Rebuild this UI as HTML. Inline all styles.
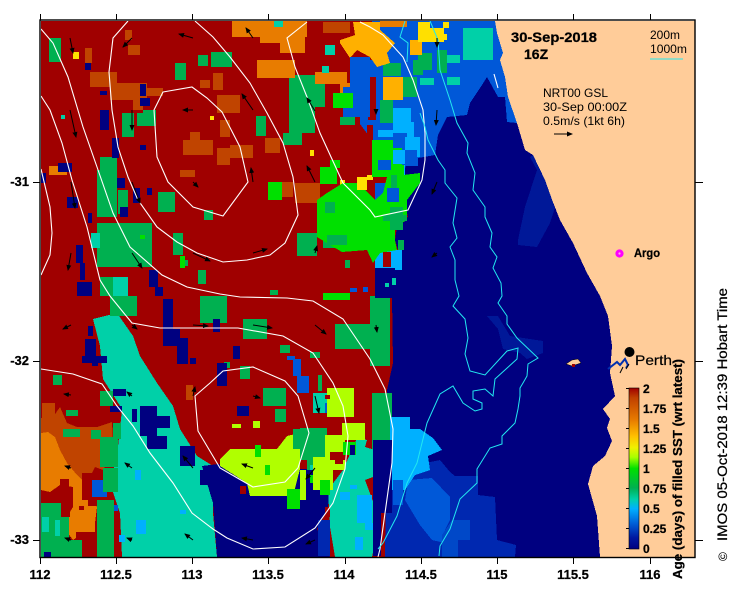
<!DOCTYPE html>
<html><head><meta charset="utf-8"><style>
html,body{margin:0;padding:0;background:#fff}
svg{display:block}
text{font-family:"Liberation Sans",sans-serif;fill:#000}
.b{font-weight:bold;stroke:#000;stroke-width:.25}
</style></head><body>
<svg width="739" height="592" viewBox="0 0 739 592" xmlns="http://www.w3.org/2000/svg">
<defs>
<linearGradient id="cb" x1="0" y1="0" x2="0" y2="1">
<stop offset="0" stop-color="#a00000"/><stop offset=".06" stop-color="#c04000"/><stop offset=".2" stop-color="#e87c00"/><stop offset=".3" stop-color="#ffc000"/><stop offset=".37" stop-color="#f0f000"/><stop offset=".43" stop-color="#a8ff00"/><stop offset=".5" stop-color="#00e000"/><stop offset=".62" stop-color="#00b050"/><stop offset=".69" stop-color="#00d0a8"/><stop offset=".75" stop-color="#00b0ff"/><stop offset=".84" stop-color="#0060d8"/><stop offset=".93" stop-color="#0018a0"/><stop offset="1" stop-color="#000080"/>
</linearGradient>
<marker id="ah" markerWidth="6" markerHeight="5" refX="5" refY="2.5" orient="auto" markerUnits="userSpaceOnUse"><path d="M0 0L6 2.5L0 5z" fill="#000"/></marker>
</defs>
<rect x="41" y="21" width="654" height="536" fill="#ffcc99"/>
<g shape-rendering="crispEdges">
<polygon fill="#000080" points="41,21 495,21 497,33 503,53 500,60 505,77 508,97 517,123 525,150 533,155 545,182 560,220 573,243 587,273 600,296 608,316 612,346 610,373 615,396 603,409 610,419 607,428 612,441 605,456 593,466 588,484 597,516 600,557 41,557"/>
<polygon fill="#001898" points="518,240 525,207 537,170 530,157 533,155 545,180 555,208 550,223 537,247 518,245"/>
<polygon fill="#001898" points="487,316 498,316 510,336 543,341 543,353 527,359 520,353 503,349 498,329"/>
<polygon fill="#0028b0" points="392,470 440,460 450,472 455,476 478,476 478,495 495,497 497,540 516,545 515,557 380,557"/>
<polygon fill="#0058d8" points="408,480 432,478 450,497 450,520 445,530 445,543 432,540 420,525 405,500"/>
<polygon fill="#0048c8" points="452,520 470,520 470,540 458,540 458,557 442,557 442,535"/>
<polygon fill="#00b0ff" points="392,429 420,429 433,438 442,450 428,456 430,470 415,475 405,490 392,490"/>
<polygon fill="#0058d8" points="370,21 495,21 497,33 503,53 500,60 505,77 508,97 517,123 507,122 505,97 498,97 487,77 482,85 470,103 467,115 447,117 438,135 435,155 407,160 403,177 380,177 345,110 345,60"/>
<polygon fill="#a00000" points="41,21 372,21 372,60 357,70 357,120 372,140 372,165 400,165 403,197 408,217 397,227 395,240 402,263 378,273 378,296 392,296 393,363 387,390 385,557 41,557"/>
<path fill="#0058d8" d="M350 60h50v50h-50zM347 87h30v30h-30zM372 100h30v60h-30zM372 150h46v16h-46z"/>
<polygon fill="#a00000" points="340,53 357,53 357,83 340,83"/>
<path fill="#a00000" d="M363 77h13v14h-13zM360 90h16v7h-16zM368 97h8v23h-8zM340 110h20v25h-20zM367 125h6v20h-6z"/>
<polygon fill="#00d0a8" points="93,319 117,313 133,336 140,356 157,383 173,406 180,429 197,456 213,466 213,513 217,557 122,557 120,513 110,483 117,456 120,429 122,409 103,379 100,346"/>
<polygon fill="#000080" points="202,466 227,463 253,488 300,469 330,469 328,509 317,529 330,557 217,557 213,503"/>
<polygon fill="#b0ff00" points="220,459 230,449 277,449 287,436 300,433 300,469 293,496 250,496 247,483 220,466"/>
<polygon fill="#c04400" points="41,418 53,417 60,407 67,423 77,427 97,427 112,422 113,443 107,463 103,470 95,467 90,477 80,480 67,463 60,450 55,437 41,433"/>
<path fill="#c04400" d="M42 403h13v15h-13z"/>
<polygon fill="#e87c00" points="41,433 48,432 55,437 60,450 67,463 77,475 82,480 82,493 90,500 97,507 95,523 95,532 83,533 73,540 67,532 67,517 73,507 73,487 60,485 50,492 41,490"/>
<path fill="#a00000" d="M60 479h9v8h-9zM42 492h15v11h-15zM58 503h12v14h-12zM67 487h6v20h-6zM76 532h27v25h-27zM82 473h25v27h-25zM88 500h9v6h-9zM79 506h5v4h-5z"/>
<path fill="#0058d8" d="M92 480h15v17h-15zM97 503h6v7h-6zM110 505h8v6h-8z"/>
<path fill="#00b050" d="M41 503h20v54h-20zM61 517h8v40h-8zM67 540h15v17h-15zM97 500h17v57h-17zM100 437h18v30h-18zM103 468h15v24h-15zM113 423h8v16h-8zM49 38h12v24h-12zM198 55h10v11h-10zM211 52h21v15h-21zM175 63h11v17h-11zM289 75h36v32h-36zM289 100h26v33h-26zM283 133h19v12h-19zM256 116h10v20h-10zM122 113h12v24h-12zM137 113h16v13h-16zM143 110h13v16h-13zM97 170h20v47h-20zM100 157h17v13h-17zM97 223h55v44h-55zM100 277h27v19h-27zM158 192h17v20h-17zM204 210h9v10h-9zM173 233h10v22h-10zM198 270h8v14h-8zM297 233h20v23h-20zM323 230h24v18h-24zM200 296h27v27h-27zM110 296h27v20h-27zM243 319h24v20h-24zM335 324h37v25h-37zM240 366h10v13h-10zM263 388h23v18h-23zM275 409h11v13h-11zM100 391h13v15h-13zM293 429h17v20h-17zM307 443h20v27h-20zM63 429h17v8h-17zM370 296h20v70h-20zM372 393h20v57h-20zM300 428h27v32h-27zM383 63h18v13h-18zM397 77h20v20h-20zM380 100h13v23h-13zM418 53h14v17h-14zM437 50h10v23h-10zM340 117h15v8h-15zM372 417h21v25h-21zM118 190h10v24h-10zM180 260h8v6h-8zM270 290h8v5h-8zM53 375h9v10h-9zM66 410h12v6h-12zM91 430h10v9h-10zM224 362h6v6h-6zM280 345h10v8h-10zM345 260h5v8h-5zM310 352h10v6h-10zM318 375h4v16h-4z"/>
<path fill="#c04400" d="M85 48h7v15h-7zM125 30h7v10h-7zM128 45h12v10h-12zM90 72h27v15h-27zM110 83h37v17h-37zM133 97h10v13h-10zM147 88h16v8h-16zM213 73h10v17h-10zM200 80h10v8h-10zM217 95h23v18h-23zM220 120h10v17h-10zM183 140h30v15h-30zM190 132h10v8h-10zM217 148h13v17h-13zM230 145h23v13h-23zM180 170h15v7h-15zM265 138h15v15h-15zM295 183h25v20h-25zM277 182h16v15h-16zM323 22h27v11h-27zM186 385h7v15h-7z"/>
<path fill="#e87c00" d="M232 21h75v16h-75zM260 27h33v16h-33zM280 37h25v16h-25zM257 60h38v18h-38zM315 72h32v12h-32zM49 166h18v9h-18zM380 21h27v6h-27zM340 83h10v20h-10z"/>
<polygon fill="#ffb000" points="353,22 380,22 380,30 395,43 387,53 390,63 377,67 370,57 357,50 350,58 340,43 340,40 355,35"/>
<path fill="#ffb000" d="M383 77h20v23h-20zM410 40h12v15h-12zM357 35h6v10h-6z"/>
<path fill="#ffe000" d="M73 52h6v7h-6zM418 22h12v20h-12zM425 34h22v6h-22zM430 28h14v14h-14zM443 22h6v6h-6zM210 116h4v4h-4zM310 150h4v6h-4zM357 177h13v6h-13zM367 175h6v6h-6zM383 249h10v3h-10zM367 243h6v7h-6zM340 180h5v10h-5z"/>
<path fill="#00d0a8" d="M274 21h9v6h-9zM325 45h10v10h-10zM322 66h7v7h-7zM91 233h9v15h-9zM113 277h15v19h-15zM463 28h30v32h-30zM447 55h13v8h-13zM447 77h13v8h-13zM420 78h14v7h-14zM61 115h4v4h-4zM42 517h7v15h-7zM55 520h5v16h-5zM313 393h14v20h-14zM310 465h5v5h-5zM335 500h5v8h-5z"/>
<path fill="#00b050" d="M413 60h10v15h-10z"/>
<polygon fill="#00d0a8" points="357,438 367,440 365,447 375,450 373,477 365,480 380,520 372,557 335,557 330,527 328,490 343,470"/>
<path fill="#00b0ff" d="M357 495h15v28h-15zM340 492h10v8h-10zM350 485h7v4h-7zM355 537h8v13h-8zM365 523h15v7h-15zM393 108h18v25h-18zM378 130h15v7h-15zM405 137h15v20h-15zM393 165h12v18h-12zM375 250h27v20h-27zM390 417h20v60h-20zM135 470h6v10h-6zM180 510h6v4h-6zM136 520h10v14h-10zM119 535h6v7h-6z"/>
<path fill="#0058d8" d="M287 356h8v4h-8zM293 359h8v17h-8zM297 376h12v17h-12zM325 403h10v10h-10zM393 480h10v25h-10zM350 288h7v4h-7zM363 287h5v5h-5zM378 167h13v10h-13zM375 183h12v17h-12zM387 193h12v12h-12zM380 150h37v8h-37zM350 57h20v30h-20zM343 87h27v30h-27z"/>
<polygon fill="#00e000" points="343,183 357,183 365,190 375,200 383,193 387,177 420,173 420,183 407,200 407,220 395,227 395,240 397,250 380,253 373,263 367,250 342,252 330,245 317,237 317,200 327,193"/>
<path fill="#00e000" d="M320 167h17v17h-17zM330 160h10v8h-10zM323 293h27v7h-27zM333 93h20v15h-20zM268 182h14v18h-14zM372 140h30v25h-30zM372 165h32v12h-32zM343 442h13v13h-13zM320 480h10v15h-10zM310 475h15v8h-15zM287 489h13v20h-13zM255 445h6v12h-6zM180 256h5v12h-5zM265 465h5v10h-5zM140 235h5v4h-5z"/>
<path fill="#00b050" d="M325 202h10v11h-10zM327 235h20v10h-20zM390 207h13v23h-13zM375 293h12v7h-12zM383 215h24v6h-24zM391 175h6v15h-6zM398 240h6v10h-6z"/>
<path fill="#0058d8" d="M378 160h13v10h-13zM387 188h12v14h-12zM393 140h10v8h-10z"/>
<path fill="#00b0ff" d="M393 150h12v14h-12zM407 122h7v15h-7z"/>
<path fill="#ffe000" d="M357 177h13v13h-13z"/>
<path fill="#a00000" d="M367 180h8v10h-8zM383 252h8v15h-8z"/>
<path fill="#b0ff00" d="M327 388h27v29h-27zM342 423h23v17h-23zM325 435h20v35h-20zM313 457h20v33h-20zM253 421h7v7h-7zM232 424h9v4h-9zM300 470h6v30h-6z"/>
<path fill="#a00000" d="M330 452h15v8h-15zM335 458h8v6h-8zM325 507h5v10h-5zM240 486h6v8h-6zM325 395h5v4h-5z"/>
<path fill="#00e000" d="M320 480h10v15h-10zM343 442h13v13h-13z"/>
<path fill="#000080" d="M112 138h7v20h-7zM100 110h9v20h-9zM140 84h6v12h-6zM140 98h10v8h-10zM58 163h14v9h-14zM117 178h8v10h-8zM133 188h7v15h-7zM147 188h5v7h-5zM120 207h8v10h-8zM67 197h11v11h-11zM88 213h4v10h-4zM76 245h7v18h-7zM80 263h5v17h-5zM77 282h15v14h-15zM149 270h9v17h-9zM155 287h8v9h-8zM41 173h5v10h-5zM85 63h6v7h-6zM100 91h7v4h-7zM163 299h10v30h-10zM163 329h17v17h-17zM177 338h11v26h-11zM85 339h11v17h-11zM82 356h25v7h-25zM88 326h5v10h-5zM213 319h7v13h-7zM113 389h13v7h-13zM110 406h12v6h-12zM132 409h5v13h-5zM140 406h17v30h-17zM157 416h13v12h-13zM147 436h20v13h-20zM180 446h15v20h-15zM217 363h10v23h-10zM237 406h12v10h-12zM233 346h7v13h-7zM373 440h19v73h-19zM350 445h5v10h-5zM200 470h10v15h-10zM44 552h7v5h-7zM92 360h6v6h-6zM140 145h6v5h-6zM190 358h6v6h-6zM373 510h8v46h-8z"/>
<path fill="#000080" d="M375 268h20v30h-20z"/>
<path fill="#0028b0" d="M318 520h12v36h-12z"/>
<path fill="#00d0a8" d="M392 278h4v7h-4zM385 283h4v4h-4z"/>
</g>
<g fill="none" stroke="#fff" stroke-width="1.1">
<polyline points="128,21 113,38 109,72 112,110 118,147 128,177 138,200 157,227 177,242 197,253 223,262 247,260 270,255 285,243 298,215 293,177 283,143 267,113 250,83 230,57 213,37 195,21"/>
<polygon points="163,92 192,87 207,98 222,112 240,147 248,182 223,216 193,207 168,182 157,157 154,110"/>
<polyline points="41,29 53,43 68,77 83,127 97,167 113,213 130,247 162,275 187,287 220,294 240,297 287,298 313,301 343,319 370,359 385,389 393,429 392,463 380,549 378,557"/>
<polyline points="41,96 50,110 62,143 72,180 87,227 100,280 110,296 132,323 160,328 238,328 283,336 313,353 333,383 343,406 348,436 345,469 333,503 315,528 285,547 253,549 227,538 213,529 192,513 173,483 150,453 133,426 117,406 102,384 73,374 41,369"/>
<polygon points="195,396 210,383 223,371 253,367 285,381 298,396 309,433 298,468 285,482 253,487 220,468 198,431"/>
<polyline points="41,169 50,207 52,233 50,255 41,275"/>
<polyline points="307,22 287,38 295,67 307,97 320,133 343,183 370,210 375,217 408,210 422,180 425,160 425,133 423,110 413,80 403,57 383,35 370,27 360,22"/>
<polyline points="494,74 498,88"/>
</g>
<g fill="none" stroke="#22e8f0" stroke-width="1">
<polyline points="430,21 438,40 440,70 450,100 457,123 468,143 467,153 475,173 473,190 485,207 485,217 492,233 490,247 497,257 493,268 501,283 502,296 498,303 507,316 507,324 517,338 538,358 528,364 527,376 523,383 520,388 520,396 518,409 515,423 502,436 502,444 490,448 477,469 477,483 460,499 450,529 440,546 439,556"/>
<polyline points="405,21 400,37 408,43 407,62"/>
<polyline points="420,113 425,127 428,140 438,160 445,170 445,183 457,198 453,223 457,238 450,247 455,260 455,280 459,296 453,306 465,319 468,338 465,354 470,371 485,375 507,351 518,348 517,359 495,379 493,396 485,389 473,391 473,399 482,403 482,409 475,411 463,403 453,386 440,394 427,423 417,463 407,483 397,516 383,543 378,549"/>
</g>
<path d="M650 59h33" stroke="#22e8f0" stroke-width="1"/>
<g stroke="#000" stroke-width="1" fill="none">
<line x1="70" y1="38" x2="73" y2="53" marker-end="url(#ah)"/><line x1="132" y1="38" x2="123" y2="47" marker-end="url(#ah)"/><line x1="193" y1="38" x2="179" y2="34" marker-end="url(#ah)"/><line x1="253" y1="38" x2="246" y2="28" marker-end="url(#ah)"/><line x1="253" y1="110" x2="242" y2="94" marker-end="url(#ah)"/><line x1="315" y1="111" x2="307" y2="98" marker-end="url(#ah)"/><line x1="193" y1="110" x2="183" y2="110" marker-end="url(#ah)"/><line x1="132" y1="110" x2="132" y2="130" marker-end="url(#ah)"/><line x1="70" y1="110" x2="76" y2="137" marker-end="url(#ah)"/><line x1="71" y1="182" x2="75" y2="208" marker-end="url(#ah)"/><line x1="132" y1="182" x2="140" y2="203" marker-end="url(#ah)"/><line x1="193" y1="182" x2="198" y2="187" marker-end="url(#ah)"/><line x1="253" y1="182" x2="251" y2="168" marker-end="url(#ah)"/><line x1="315" y1="182" x2="307" y2="166" marker-end="url(#ah)"/><line x1="71" y1="253" x2="68" y2="270" marker-end="url(#ah)"/><line x1="132" y1="253" x2="142" y2="268" marker-end="url(#ah)"/><line x1="193" y1="253" x2="210" y2="261" marker-end="url(#ah)"/><line x1="253" y1="253" x2="267" y2="249" marker-end="url(#ah)"/><line x1="315" y1="253" x2="317" y2="246" marker-end="url(#ah)"/><line x1="71" y1="325" x2="63" y2="329" marker-end="url(#ah)"/><line x1="132" y1="325" x2="137" y2="329" marker-end="url(#ah)"/><line x1="193" y1="325" x2="208" y2="326" marker-end="url(#ah)"/><line x1="253" y1="325" x2="272" y2="328" marker-end="url(#ah)"/><line x1="315" y1="325" x2="326" y2="334" marker-end="url(#ah)"/><line x1="71" y1="395" x2="64" y2="394" marker-end="url(#ah)"/><line x1="132" y1="396" x2="127" y2="392" marker-end="url(#ah)"/><line x1="193" y1="396" x2="195" y2="387" marker-end="url(#ah)"/><line x1="253" y1="396" x2="260" y2="398" marker-end="url(#ah)"/><line x1="315" y1="396" x2="319" y2="413" marker-end="url(#ah)"/><line x1="71" y1="468" x2="65" y2="466" marker-end="url(#ah)"/><line x1="132" y1="468" x2="125" y2="463" marker-end="url(#ah)"/><line x1="193" y1="468" x2="183" y2="456" marker-end="url(#ah)"/><line x1="253" y1="468" x2="242" y2="464" marker-end="url(#ah)"/><line x1="315" y1="468" x2="306" y2="479" marker-end="url(#ah)"/><line x1="71" y1="540" x2="65" y2="538" marker-end="url(#ah)"/><line x1="132" y1="540" x2="127" y2="538" marker-end="url(#ah)"/><line x1="193" y1="540" x2="185" y2="534" marker-end="url(#ah)"/><line x1="253" y1="540" x2="242" y2="538" marker-end="url(#ah)"/><line x1="315" y1="540" x2="306" y2="544" marker-end="url(#ah)"/><line x1="437" y1="38" x2="437" y2="47" marker-end="url(#ah)"/><line x1="437" y1="110" x2="436" y2="125" marker-end="url(#ah)"/><line x1="437" y1="182" x2="432" y2="194" marker-end="url(#ah)"/><line x1="437" y1="253" x2="432" y2="257" marker-end="url(#ah)"/><line x1="376" y1="110" x2="376" y2="114" marker-end="url(#ah)"/><line x1="376" y1="325" x2="377" y2="332" marker-end="url(#ah)"/><line x1="554" y1="134" x2="572" y2="134" marker-end="url(#ah)"/>
</g>
<polygon fill="#ffcc99" stroke="#000" stroke-width=".5" points="566,364 572,360 578,359 581,363 572,366"/>
<rect x="572" y="364" width="3" height="3" fill="#a00000"/>
<path d="M608 369L617 362L620 365L625 359L628 365L626 368" stroke="#0030b0" stroke-width="2" fill="none"/>
<circle cx="629.5" cy="352" r="5" fill="#000"/>
<path d="M620 373l3-6M629 364l-3 5" stroke="#000" stroke-width="1"/>
<rect x="40" y="20" width="655" height="537.5" fill="none" stroke="#000" stroke-width="1.4"/>
<path d="M40.5 14v6M116.5 14v6M192.5 14v6M268.5 14v6M345.5 14v6M421.5 14v6M497.5 14v6M573.5 14v6M650.5 14v6M40.5 557v7M116.5 557v7M192.5 557v7M268.5 557v7M345.5 557v7M421.5 557v7M497.5 557v7M573.5 557v7M650.5 557v7M33 182.5h7M33 361.5h7M33 540.5h7M695 182.5h8M695 361.5h8M695 540.5h8" stroke="#000" stroke-width="1"/>
<g font-size="13" text-anchor="middle">
<text x="40" y="579" class="b">112</text><text x="116" y="579" class="b">112.5</text><text x="192" y="579" class="b">113</text><text x="268" y="579" class="b">113.5</text><text x="344" y="579" class="b">114</text><text x="421" y="579" class="b">114.5</text><text x="497" y="579" class="b">115</text><text x="573" y="579" class="b">115.5</text><text x="650" y="579" class="b">116</text>
</g>
<g font-size="13" text-anchor="end">
<text x="29" y="186" class="b">-31</text><text x="29" y="365" class="b">-32</text><text x="29" y="544" class="b">-33</text>
</g>
<text x="511" y="42" font-size="14" class="b" textLength="86" lengthAdjust="spacingAndGlyphs">30-Sep-2018</text>
<text x="524" y="59" font-size="14" class="b">16Z</text>
<text x="650" y="39" font-size="12" textLength="30" lengthAdjust="spacingAndGlyphs">200m</text>
<text x="650" y="53" font-size="12" textLength="37" lengthAdjust="spacingAndGlyphs">1000m</text>
<text x="543" y="97" font-size="12" textLength="65" lengthAdjust="spacingAndGlyphs">NRT00 GSL</text>
<text x="543" y="111" font-size="12" textLength="84" lengthAdjust="spacingAndGlyphs">30-Sep 00:00Z</text>
<text x="543" y="125" font-size="12" textLength="82" lengthAdjust="spacingAndGlyphs">0.5m/s (1kt 6h)</text>
<circle cx="619.5" cy="253.5" r="2.6" fill="#ffaaee" stroke="#ff00ff" stroke-width="3"/>
<text x="634" y="257" font-size="12" class="b" textLength="26" lengthAdjust="spacingAndGlyphs">Argo</text>
<text x="635" y="365" font-size="14" stroke="#000" stroke-width=".2" textLength="37" lengthAdjust="spacingAndGlyphs">Perth</text>
<rect x="629" y="388" width="10" height="161" fill="url(#cb)" stroke="#000" stroke-width=".6"/>
<path d="M626 388.5h3M626 408.5h3M626 428.5h3M626 448.5h3M626 468.5h3M626 488.5h3M626 508.5h3M626 528.5h3M626 548.5h3" stroke="#000"/>
<g font-size="12">
<text x="643" y="393" class="b">2</text><text x="643" y="413" class="b">1.75</text><text x="643" y="433" class="b">1.5</text><text x="643" y="453" class="b">1.25</text><text x="643" y="473" class="b">1</text><text x="643" y="493" class="b">0.75</text><text x="643" y="513" class="b">0.5</text><text x="643" y="533" class="b">0.25</text><text x="643" y="553" class="b">0</text>
</g>
<text transform="translate(682,579) rotate(-90)" font-size="13" class="b" textLength="220" lengthAdjust="spacingAndGlyphs">Age (days) of filled SST (wrt latest)</text>
<text transform="translate(727,561) rotate(-90)" font-size="12" stroke="#000" stroke-width=".1">©</text>
<text transform="translate(727,541) rotate(-90)" font-size="14" stroke="#000" stroke-width=".25" textLength="253" lengthAdjust="spacingAndGlyphs">IMOS 05-Oct-2018 12:39 Hobart Time</text>
</svg>
</body></html>
